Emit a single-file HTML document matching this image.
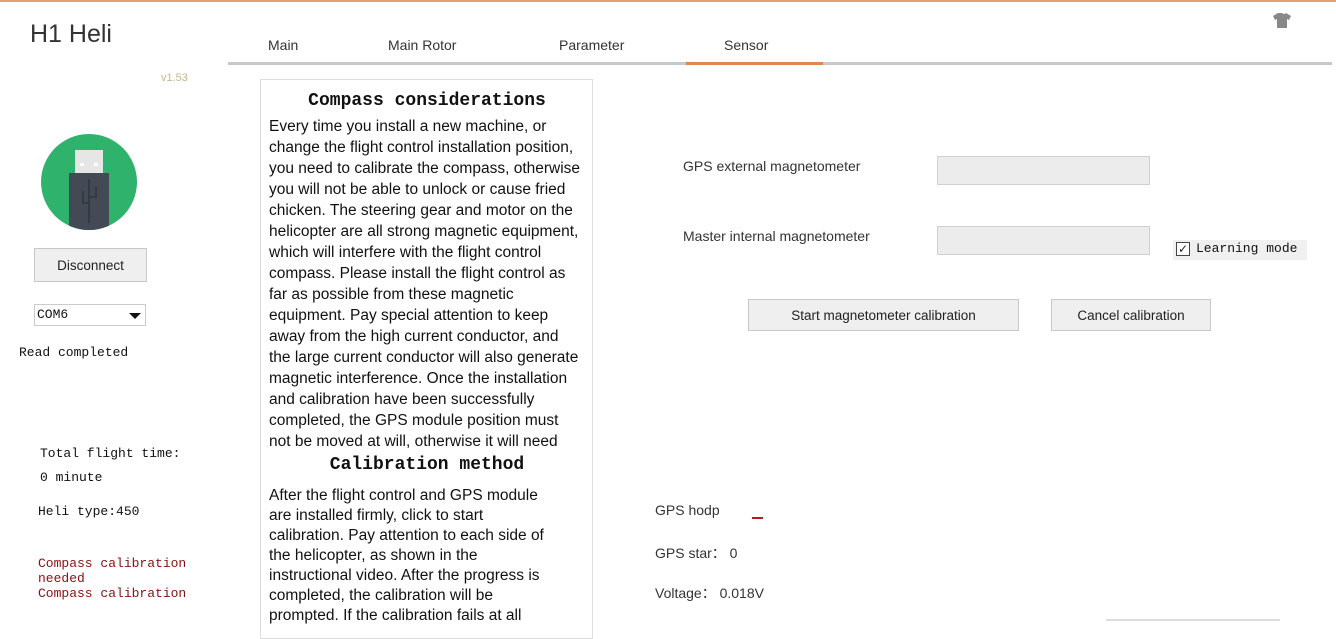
<!DOCTYPE html>
<html><head><meta charset="utf-8"><style>
*{margin:0;padding:0;box-sizing:border-box}
body{width:1336px;height:621px;overflow:hidden;background:#fff;position:relative;font-family:"Liberation Sans",sans-serif;color:#222}
.a{position:absolute;white-space:nowrap}
.m{font-family:"Liberation Mono",monospace;font-size:13px;color:#111}
.s{font-size:14px;color:#333}
.btn{position:absolute;background:#efefef;border:1px solid #c8c8c8;font-size:13.5px;color:#222;display:flex;align-items:center;justify-content:center}
.inp{position:absolute;background:#ececec;border:1px solid #d0d0d0}
.p{position:absolute;left:269px;font-size:15.5px;line-height:21px;color:#111;white-space:nowrap}
.h{position:absolute;left:261px;width:332px;text-align:center;font-family:"Liberation Mono",monospace;font-weight:bold;font-size:18px;color:#111}
</style></head><body>
<div class="a" style="left:0;top:0;width:1336px;height:2px;background:#e0a070"></div>
<div class="a" style="left:30px;top:20px;font-size:25px;color:#333">H1 Heli</div>
<div class="a" style="left:161px;top:72px;font-size:11px;color:#c9b58a">v1.53</div>
<svg class="a" style="left:40px;top:133px" width="98" height="98" viewBox="0 0 98 98">
<defs><clipPath id="c"><circle cx="49" cy="49" r="48"/></clipPath></defs>
<circle cx="49" cy="49" r="48" fill="#2fb26b"/>
<g clip-path="url(#c)"><rect x="35" y="17" width="28" height="26" fill="#e6e6e6"/>
<rect x="29" y="40" width="40" height="70" fill="#434a55"/>
<path d="M49 46v44M43 58v12h6M56 54v10h-7" stroke="#2f343c" stroke-width="1.5" fill="none"/></g>
<rect x="40" y="30" width="4" height="3" fill="#fff"/><rect x="54" y="30" width="4" height="3" fill="#fff"/>
</svg>
<div class="btn" style="left:34px;top:248px;width:113px;height:34px">Disconnect</div>
<div class="a" style="left:34px;top:304px;width:112px;height:22px;border:1px solid #ccc"></div>
<div class="a m" style="left:37px;top:307px">COM6</div>
<div class="a" style="left:129px;top:313px;width:0;height:0;border-left:6px solid transparent;border-right:6px solid transparent;border-top:6px solid #111"></div>
<div class="a m" style="left:19px;top:345px">Read completed</div>
<div class="a m" style="left:40px;top:446px">Total flight time:</div>
<div class="a m" style="left:40px;top:470px">0 minute</div>
<div class="a m" style="left:38px;top:504px">Heli type:450</div>
<div class="a m" style="left:38px;top:556px;color:#8a1010;line-height:15px">Compass calibration<br>needed<br>Compass calibration</div>

<div class="a s" style="left:268px;top:37px">Main</div>
<div class="a s" style="left:388px;top:37px">Main Rotor</div>
<div class="a s" style="left:559px;top:37px">Parameter</div>
<div class="a s" style="left:724px;top:37px">Sensor</div>
<div class="a" style="left:228px;top:62px;width:1104px;height:3px;background:#c8c8c8"></div>
<div class="a" style="left:686px;top:62px;width:137px;height:3px;background:#e08850"></div>
<svg class="a" style="left:1272px;top:12px" width="20" height="17" viewBox="0 0 20 17"><path d="M6 1L1 4l2 4 2-1v9h10V7l2 1 2-4-5-3q-2 2-4 0z" fill="#888"/></svg>

<div class="a" style="left:260px;top:79px;width:333px;height:560px;border:1px solid #ddd"></div>
<div class="h" style="top:91px">Compass considerations</div>
<div class="p" style="top:116px">Every time you install a new machine, or<br>change the flight control installation position,<br>you need to calibrate the compass, otherwise<br>you will not be able to unlock or cause fried<br>chicken. The steering gear and motor on the<br>helicopter are all strong magnetic equipment,<br>which will interfere with the flight control<br>compass. Please install the flight control as<br>far as possible from these magnetic<br>equipment. Pay special attention to keep<br>away from the high current conductor, and<br>the large current conductor will also generate<br>magnetic interference. Once the installation<br>and calibration have been successfully<br>completed, the GPS module position must<br>not be moved at will, otherwise it will need</div>
<div class="h" style="top:455px">Calibration method</div>
<div class="p" style="top:486px;line-height:20px">After the flight control and GPS module<br>are installed firmly, click to start<br>calibration. Pay attention to each side of<br>the helicopter, as shown in the<br>instructional video. After the progress is<br>completed, the calibration will be<br>prompted. If the calibration fails at all</div>

<div class="a s" style="left:683px;top:158px">GPS external magnetometer</div>
<div class="inp" style="left:937px;top:156px;width:213px;height:29px"></div>
<div class="a s" style="left:683px;top:228px">Master internal magnetometer</div>
<div class="inp" style="left:937px;top:226px;width:213px;height:29px"></div>
<div class="a" style="left:1173px;top:240px;width:134px;height:20px;background:#f0f0f0"></div>
<div class="a" style="left:1176px;top:242px;width:14px;height:14px;border:1px solid #444;background:#fff;font-size:12px;line-height:12px;text-align:center">✓</div>
<div class="a m" style="left:1196px;top:241px">Learning mode</div>
<div class="btn" style="left:748px;top:299px;width:271px;height:32px">Start magnetometer calibration</div>
<div class="btn" style="left:1051px;top:299px;width:160px;height:32px">Cancel calibration</div>

<div class="a s" style="left:655px;top:502px">GPS hodp</div>
<div class="a" style="left:752px;top:517px;width:11px;height:2px;background:#b02020"></div>
<div class="a s" style="left:655px;top:543px">GPS star： 0</div>
<div class="a s" style="left:655px;top:583px">Voltage： 0.018V</div>
<div class="a" style="left:1106px;top:619px;width:174px;height:2px;background:#ddd"></div>
</body></html>
